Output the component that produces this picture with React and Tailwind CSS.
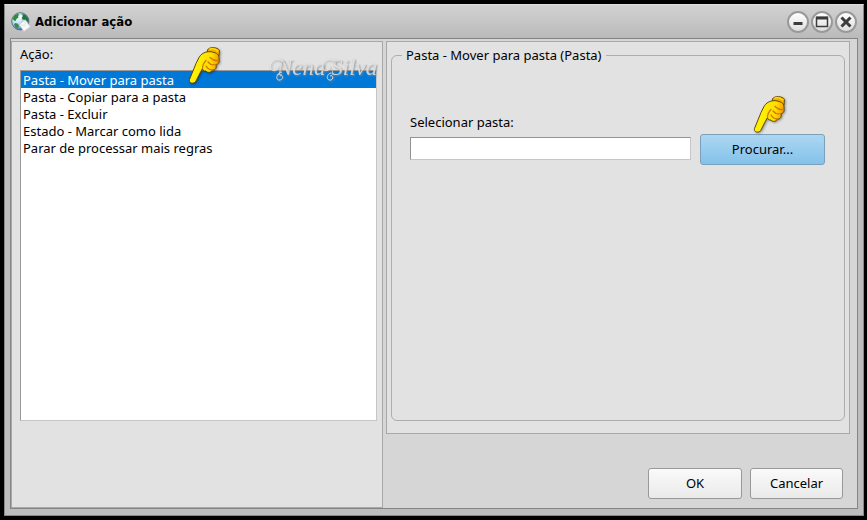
import { useState } from "react";

const actions = [
  "Pasta - Mover para pasta",
  "Pasta - Copiar para a pasta",
  "Pasta - Excluir",
  "Estado - Marcar como lida",
  "Parar de processar mais regras",
];

function GlobeMailIcon() {
  return (
    <svg className="h-5 w-5" viewBox="0 0 20 20" aria-hidden="true">
      <defs>
        <radialGradient id="sea" cx="35%" cy="35%" r="70%">
          <stop offset="0" stopColor="#f4fbff" />
          <stop offset="0.5" stopColor="#b4d8f2" />
          <stop offset="1" stopColor="#2464a4" />
        </radialGradient>
      </defs>
      <circle cx="9.3" cy="9.3" r="8.6" fill="url(#sea)" stroke="#56697a" strokeWidth="0.9" />
      <path d="M1.6 6.8 3.4 3.6 6.5 1.7 8 2.6 7 4.4 7.6 5.6 5.4 7 4.6 9 3 8.4Z" fill="#2f8a3a" />
      <path d="M11 2 14 2.8 16.8 6 17.2 9 14.8 9.4 13 7.8 11.4 7.6 11 5.4 12 4Z" fill="#1d7734" />
      <path d="M4.2 11 7 11.7 8 13.5 6.8 16.6 4.5 15.3 3 12.5Z" fill="#388c45" />
      <path d="M8.2 3.6 10.4 3 10.8 5 9.6 7.2 8.4 6Z" fill="#f5fbff" />
      <path d="m8 12.4 6.2-4.7 5.2 7-6.4 4.8Z" fill="#f7f8f6" stroke="#c3c7c4" strokeWidth="0.7" />
      <path d="m8.2 12.6 5.6.9.6-5.4" fill="none" stroke="#d6d9d7" strokeWidth="0.6" />
    </svg>
  );
}

function PointingHand() {
  return (
    <svg className="h-10 w-9 drop-shadow-[1px_1px_1px_rgba(0,0,0,0.35)]" viewBox="0 0 36 40" aria-hidden="true">
      <defs>
        <linearGradient id="skin" x1="0" y1="0" x2="1" y2="0.2">
          <stop offset="0.3" stopColor="#fff000" />
          <stop offset="0.75" stopColor="#ffdc00" />
          <stop offset="1" stopColor="#f59a00" />
        </linearGradient>
      </defs>
      <path d="M19.5 5C21 1.5 30 2 31.5 5.5L31 11 19 10Z" fill="#f5ac00" stroke="#5b4500" strokeWidth="0.9" />
      <path
        d="M11 12.5C14 7 21 5.5 26 7.5 30 8.5 31.5 11 31 14 32 18 29.5 19.5 28 19.5 29 23 27 25.5 24.5 25 23 28 19.5 28 18 26 15.5 26.5 14.5 24.5 14.5 23.5L11.5 29 8 36C6 39.5 0.5 38.5 1.5 34.5L8 18.5Z"
        fill="url(#skin)" stroke="#4d3c00" strokeWidth="0.9" strokeLinejoin="round"
      />
      <path d="M22 12.5C24.5 15 28 16 30.5 15.5M20 17C22 19.5 25 20.5 28 19.5M18 21C19.5 23.5 22 25 24.5 25M18 15.5C16 17.5 14.5 20 14.5 23.5" fill="none" stroke="#d07800" strokeWidth="1.3" strokeLinecap="round" />
      <path d="M22 4C25 3.2 28 4 29.5 6" fill="none" stroke="#ffe100" strokeWidth="1.3" strokeLinecap="round" />
    </svg>
  );
}

function WindowButton({ label, children }) {
  return (
    <button
      type="button"
      aria-label={label}
      className="flex h-[22px] w-[22px] items-center justify-center rounded-full border-2 border-[#999] bg-linear-to-b from-white to-[#dedede]"
    >
      <svg className="h-3.5 w-3.5 shrink-0" viewBox="0 0 14 14" fill="none" stroke="#3c3c3c" aria-hidden="true">
        {children}
      </svg>
    </button>
  );
}

function DialogButton({ children, className = "" }) {
  return (
    <button
      type="button"
      className={`h-[31px] rounded-[3px] border border-[#999] bg-linear-to-b from-[#fafafa] to-[#eaeaea] ${className}`}
    >
      {children}
    </button>
  );
}

export default function App() {
  const [selected, setSelected] = useState(0);

  return (
    <div className="flex min-h-screen bg-black p-1 pr-[3px] font-[Tahoma,'Noto_Sans',sans-serif] text-[13px] leading-[17px] text-black">
      <main className="relative flex flex-1 flex-col border border-[#888] border-t-[#ddd] bg-[#bdbdbd] pb-[6px]">
        <header className="flex h-[33px] items-center gap-1 bg-linear-to-b from-[#d2d2d2] to-[#bababa] px-[6px]">
          <GlobeMailIcon />
          <h1 className="flex-1 font-[Tahoma,'DejaVu_Sans_Condensed',sans-serif] font-bold">Adicionar ação</h1>
          <div className="flex gap-[2px]">
            <WindowButton label="Minimizar">
              <path d="M2.5 8.5h9" strokeWidth="3" />
            </WindowButton>
            <WindowButton label="Maximizar">
              <path d="M1.5 2.5h11v9h-11Z" strokeWidth="1.5" />
              <path d="M1 3h12" strokeWidth="3" />
            </WindowButton>
            <WindowButton label="Fechar">
              <path d="m2.5 2.5 9 9m0-9-9 9" strokeWidth="3" />
            </WindowButton>
          </div>
        </header>

        <div className="mx-[5px] flex flex-1 gap-[3px] border border-[#858585] bg-[#d6d6d6] pt-[2px] pr-[7px]">
          <section className="flex w-[372px] shrink-0 flex-col border border-[#a8a8a8] bg-[#e2e2e2] pt-1 pr-[5px] pl-2">
            <h2 id="action-label" className="mb-[7px] h-[17px]">Ação:</h2>
            <ul
              role="listbox"
              aria-labelledby="action-label"
              className="h-[351px] border border-[#c6c6c6] border-t-[#999] border-l-[#999] bg-white"
            >
              {actions.map((action, index) => (
                <li
                  key={action}
                  role="option"
                  aria-selected={index === selected}
                  onClick={() => setSelected(index)}
                  className={`cursor-default px-[2px] pt-px leading-4 ${index === selected ? "bg-[#0078d7] text-white" : ""}`}
                >
                  {action}
                </li>
              ))}
            </ul>
          </section>

          <div className="flex min-w-0 flex-1 flex-col justify-between">
            <section className="border border-[#a8a8a8] bg-[#e2e2e2] px-1 pt-[5px] pb-3">
              <fieldset className="h-[374px] min-w-0 rounded-md border border-[#adadad] pr-[19px] pl-[18px]">
                <legend className="-ml-2 px-1">Pasta - Mover para pasta (Pasta)</legend>
                <label htmlFor="folder" className="mt-[50px] block">Selecionar pasta:</label>
                <div className="mt-[3px] flex items-start gap-[9px]">
                  <input
                    id="folder"
                    type="text"
                    className="mt-[3px] h-[23px] min-w-0 flex-1 border border-[#c6c6c6] border-t-[#929292] border-l-[#929292] bg-white px-1 outline-none"
                  />
                  <div className="relative">
                    <button
                      type="button"
                      className="h-[31px] w-[125px] rounded-[3px] border border-[#7ba0b9] bg-linear-to-b from-[#add6f1] to-[#83c2eb]"
                    >
                      Procurar...
                    </button>
                    <span className="pointer-events-none absolute bottom-full left-[53px]">
                      <PointingHand />
                    </span>
                  </div>
                </div>
              </fieldset>
            </section>
            <footer className="flex justify-end gap-2 pr-[7px] pb-[9px]">
              <DialogButton className="w-[94px]">OK</DialogButton>
              <DialogButton className="w-[93px]">Cancelar</DialogButton>
            </footer>
          </div>
        </div>

        <span className="pointer-events-none absolute top-[40px] left-[183px]">
          <PointingHand />
        </span>
        <span className="pointer-events-none absolute top-[51px] left-[264px] flex opacity-90">
          <svg
            className="absolute top-0 left-0 h-7 w-24 drop-shadow-[1px_1px_1px_#888]"
            viewBox="0 0 96 28"
            fill="none"
            stroke="#e9e9e9"
            strokeWidth="1"
            aria-hidden="true"
          >
            <path d="M14 5C4 0-1 9 2 13 5 17 11 13 8 10M13 16C7 17 6 25 11 24 15 23 14 18 11 20" />
            <path d="M66 5C57 0 51 9 54 13 57 17 63 13 60 10M62 17C57 18 57 25 62 24 65 23 64 18 61 20" />
          </svg>
          <span className="pl-2 font-['Liberation_Serif',serif] text-[23px] leading-6 text-[#dedede] italic [text-shadow:1px_1px_2px_#888]">
            Nena Silva
          </span>
        </span>
      </main>
    </div>
  );
}
